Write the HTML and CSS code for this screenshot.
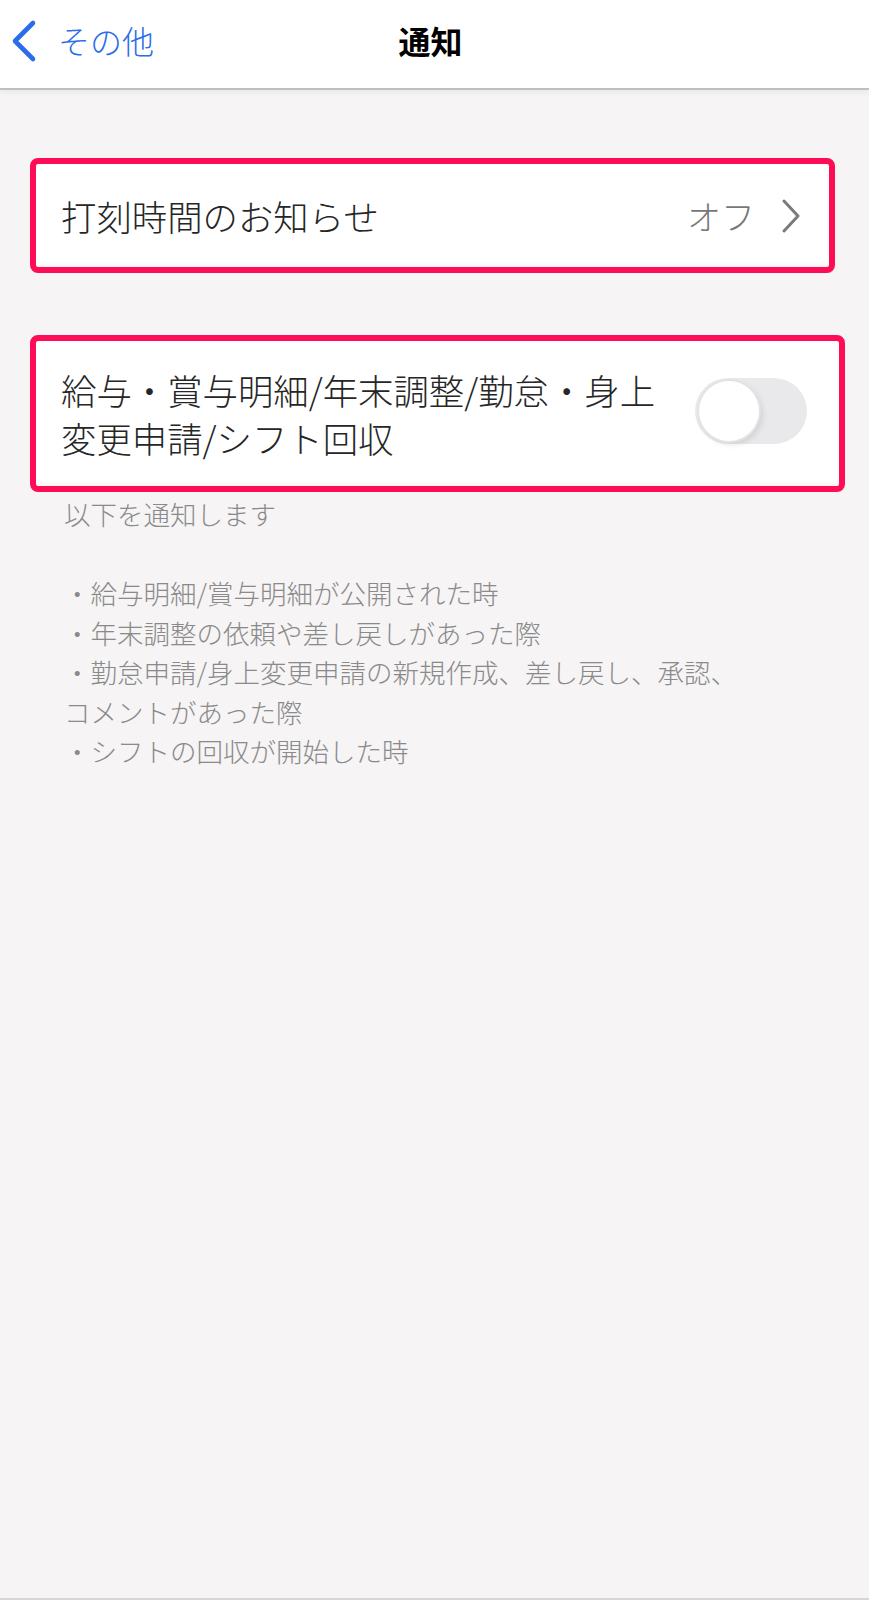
FILE: index.html
```html
<!DOCTYPE html>
<html lang="ja">
<head>
<meta charset="utf-8">
<title>通知</title>
<link rel="stylesheet" href="styles.css">
</head>
<body>
<div class="screen">
  <header class="navbar">
    <a class="nav-back" href="#">
      <svg class="nav-back-icon" width="28" height="44" viewBox="0 0 28 44" aria-hidden="true">
        <path d="M23 4 L5 22 L23 40" fill="none" stroke="#2b6ced" stroke-width="4.6" stroke-linecap="round" stroke-linejoin="round"/>
      </svg>
      <span class="nav-back-label">その他</span>
    </a>
    <h1 class="nav-title">通知</h1>
    <span class="nav-spacer"></span>
  </header>

  <main class="content">
    <section class="card card-narrow">
      <div class="row">
        <span class="row-label">打刻時間のお知らせ</span>
        <span class="row-value">オフ</span>
        <svg class="row-chevron" width="20" height="34" viewBox="0 0 20 34" aria-hidden="true">
          <path d="M3 2 L17 17 L3 32" fill="none" stroke="#7a7a7a" stroke-width="3" stroke-linecap="round" stroke-linejoin="round"/>
        </svg>
      </div>
    </section>

    <section class="card card-wide">
      <div class="row row-tall">
        <span class="row-label">給与・賞与明細/年末調整/勤怠・身上<br>変更申請/シフト回収</span>
        <span class="switch" role="switch" aria-checked="false"><span class="switch-knob"></span></span>
      </div>
    </section>

    <p class="footnote">以下を通知します<br><br>・給与明細/賞与明細が公開された時<br>・年末調整の依頼や差し戻しがあった際<br>・勤怠申請/身上変更申請の新規作成、差し戻し、承認、<br>コメントがあった際<br>・シフトの回収が開始した時</p>
  </main>
</div>
</body>
</html>
```

FILE: styles.css
```css
* {
  box-sizing: border-box;
}

html, body {
  margin: 0;
  padding: 0;
}

body {
  background: #f6f4f5;
  font-family: "Noto Sans CJK JP", "Noto Sans", "Liberation Sans", sans-serif;
  color: #222;
}

.screen {
  display: flex;
  flex-direction: column;
  min-height: 1600px;
}

.navbar {
  display: grid;
  grid-template-columns: 1fr auto 1fr;
  align-items: center;
  height: 90px;
  background: #fff;
  border-bottom: 2px solid #bfbfbf;
  box-shadow: 0 3px 6px rgba(0, 0, 0, 0.05);
  padding: 0 0 8px 0;
}

.nav-back {
  display: flex;
  align-items: center;
  gap: 20px;
  margin-left: 10px;
  text-decoration: none;
  color: #2b6ced;
}

.nav-back-icon {
  display: block;
  margin-top: 2px;
}

.nav-back-label {
  font-size: 32px;
  line-height: 40px;
  font-weight: 300;
}

.nav-title {
  margin: 0;
  font-size: 32px;
  font-weight: 700;
  line-height: 40px;
  color: #000;
  padding-right: 8px;
}

.content {
  flex: 1;
  display: flex;
  flex-direction: column;
  padding: 68px 0 0 30px;
  border-bottom: 2px solid #d6d6d6;
}

.card {
  border: 6px solid #fe0c55;
  border-radius: 8px;
  background: #fff;
  box-shadow: inset 0 -6px 6px -4px rgba(0, 0, 0, 0.05);
}

.card-narrow {
  width: 805px;
  height: 115px;
}

.card-wide {
  width: 815px;
  height: 157px;
  margin-top: 62px;
}

.row {
  display: flex;
  align-items: center;
  height: 100%;
  padding: 0 28px 0 25px;
}

.row-tall {
  padding: 0 32px 0 25px;
}

.row-label {
  flex: 1;
  font-size: 35.4px;
  line-height: 48px;
  font-weight: 300;
  color: #262626;
}

.row-value {
  font-size: 34px;
  line-height: 48px;
  font-weight: 300;
  color: #777;
  margin-right: 26px;
}

.row-chevron {
  display: block;
}

.switch {
  position: relative;
  display: block;
  width: 112px;
  height: 66px;
  border-radius: 33px;
  background: #e9e9eb;
  margin-top: -6px;
}

.switch-knob {
  position: absolute;
  left: 4px;
  top: 3px;
  width: 60px;
  height: 60px;
  border-radius: 50%;
  background: #fff;
  box-shadow: 0 0 0 2px #e3e3e5, 3px 3px 6px rgba(0, 0, 0, 0.12);
}

.footnote {
  margin: 2px 0 0 34px;
  font-size: 26.5px;
  line-height: 39.5px;
  font-weight: 300;
  color: #8a8a8a;
}
```
